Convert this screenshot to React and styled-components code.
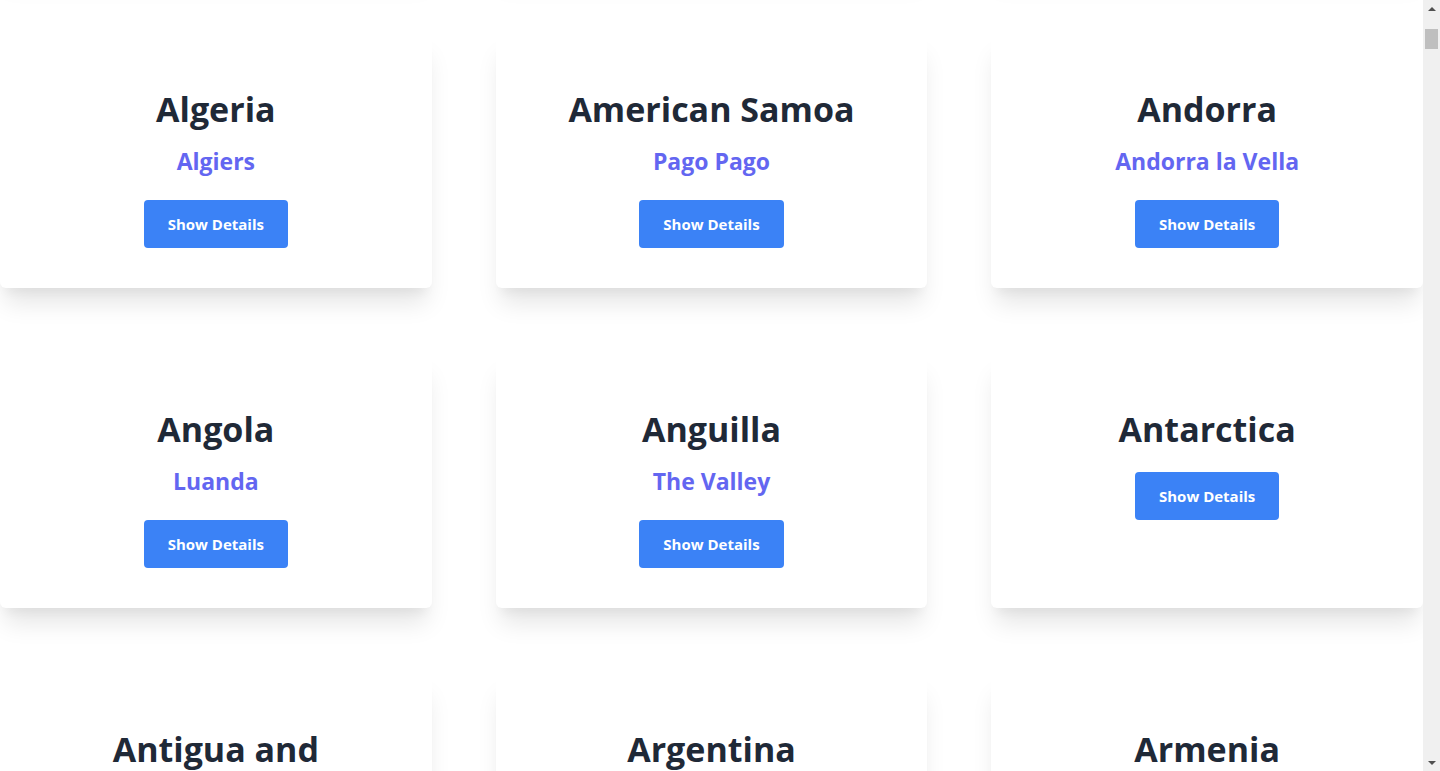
import React, { useLayoutEffect, useRef } from "react";
import styled, { createGlobalStyle } from "styled-components";

// name|capital, capital left empty when there is none
const RAW = `Afghanistan|Kabul;Åland Islands|Mariehamn;Albania|Tirana;Algeria|Algiers;American Samoa|Pago Pago;Andorra|Andorra la Vella;Angola|Luanda;Anguilla|The Valley;Antarctica|;Antigua and Barbuda|Saint John's;Argentina|Buenos Aires;Armenia|Yerevan;Aruba|Oranjestad;Australia|Canberra;Austria|Vienna;Azerbaijan|Baku;Bahamas|Nassau;Bahrain|Manama;Bangladesh|Dhaka;Barbados|Bridgetown;Belarus|Minsk;Belgium|Brussels;Belize|Belmopan;Benin|Porto-Novo;Bermuda|Hamilton;Bhutan|Thimphu;Bolivia (Plurinational State of)|Sucre;Bonaire, Sint Eustatius and Saba|Kralendijk;Bosnia and Herzegovina|Sarajevo;Botswana|Gaborone;Bouvet Island|;Brazil|Brasília;British Indian Ocean Territory|Diego Garcia;United States Minor Outlying Islands|;Virgin Islands (British)|Road Town;Virgin Islands (U.S.)|Charlotte Amalie;Brunei Darussalam|Bandar Seri Begawan;Bulgaria|Sofia;Burkina Faso|Ouagadougou;Burundi|Gitega;Cambodia|Phnom Penh;Cameroon|Yaoundé;Canada|Ottawa;Cabo Verde|Praia;Cayman Islands|George Town;Central African Republic|Bangui;Chad|N'Djamena;Chile|Santiago;China|Beijing;Christmas Island|Flying Fish Cove;Cocos (Keeling) Islands|West Island;Colombia|Bogotá;Comoros|Moroni;Congo|Brazzaville;Congo (Democratic Republic of the)|Kinshasa;Cook Islands|Avarua;Costa Rica|San José;Croatia|Zagreb;Cuba|Havana;Curaçao|Willemstad;Cyprus|Nicosia;Czech Republic|Prague;Denmark|Copenhagen;Djibouti|Djibouti;Dominica|Roseau;Dominican Republic|Santo Domingo;Ecuador|Quito;Egypt|Cairo;El Salvador|San Salvador;Equatorial Guinea|Malabo;Eritrea|Asmara;Estonia|Tallinn;Ethiopia|Addis Ababa;Falkland Islands (Malvinas)|Stanley;Faroe Islands|Tórshavn;Fiji|Suva;Finland|Helsinki;France|Paris;French Guiana|Cayenne;French Polynesia|Papeetē;French Southern Territories|Port-aux-Français;Gabon|Libreville;Gambia|Banjul;Georgia|Tbilisi;Germany|Berlin;Ghana|Accra;Gibraltar|Gibraltar;Greece|Athens;Greenland|Nuuk;Grenada|St. George's;Guadeloupe|Basse-Terre;Guam|Hagåtña;Guatemala|Guatemala City;Guernsey|St. Peter Port;Guinea|Conakry;Guinea-Bissau|Bissau;Guyana|Georgetown;Haiti|Port-au-Prince;Heard Island and McDonald Islands|;Vatican City|Vatican City;Honduras|Tegucigalpa;Hungary|Budapest;Hong Kong|City of Victoria;Iceland|Reykjavík;India|New Delhi;Indonesia|Jakarta;Ivory Coast|Yamoussoukro;Iran (Islamic Republic of)|Tehran;Iraq|Baghdad;Ireland|Dublin;Isle of Man|Douglas;Israel|Jerusalem;Italy|Rome;Jamaica|Kingston;Japan|Tokyo;Jersey|Saint Helier;Jordan|Amman;Kazakhstan|Nur-Sultan;Kenya|Nairobi;Kiribati|South Tarawa;Kuwait|Kuwait City;Kyrgyzstan|Bishkek;Lao People's Democratic Republic|Vientiane;Latvia|Riga;Lebanon|Beirut;Lesotho|Maseru;Liberia|Monrovia;Libya|Tripoli;Liechtenstein|Vaduz;Lithuania|Vilnius;Luxembourg|Luxembourg;Macao|;North Macedonia|Skopje;Madagascar|Antananarivo;Malawi|Lilongwe;Malaysia|Kuala Lumpur;Maldives|Malé;Mali|Bamako;Malta|Valletta;Marshall Islands|Majuro;Martinique|Fort-de-France;Mauritania|Nouakchott;Mauritius|Port Louis;Mayotte|Mamoudzou;Mexico|Mexico City;Micronesia (Federated States of)|Palikir;Moldova (Republic of)|Chișinău;Monaco|Monaco;Mongolia|Ulan Bator;Montenegro|Podgorica;Montserrat|Plymouth;Morocco|Rabat;Mozambique|Maputo;Myanmar|Naypyidaw;Namibia|Windhoek;Nauru|Yaren;Nepal|Kathmandu;Netherlands|Amsterdam;New Caledonia|Nouméa;New Zealand|Wellington;Nicaragua|Managua;Niger|Niamey;Nigeria|Abuja;Niue|Alofi;Norfolk Island|Kingston;Korea (Democratic People's Republic of)|Pyongyang;Northern Mariana Islands|Saipan;Norway|Oslo;Oman|Muscat;Pakistan|Islamabad;Palau|Ngerulmud;Palestine, State of|Ramallah;Panama|Panama City;Papua New Guinea|Port Moresby;Paraguay|Asunción;Peru|Lima;Philippines|Manila;Pitcairn|Adamstown;Poland|Warsaw;Portugal|Lisbon;Puerto Rico|San Juan;Qatar|Doha;Republic of Kosovo|Pristina;Réunion|Saint-Denis;Romania|Bucharest;Russian Federation|Moscow;Rwanda|Kigali;Saint Barthélemy|Gustavia;Saint Helena, Ascension and Tristan da Cunha|Jamestown;Saint Kitts and Nevis|Basseterre;Saint Lucia|Castries;Saint Martin (French part)|Marigot;Saint Pierre and Miquelon|Saint-Pierre;Saint Vincent and the Grenadines|Kingstown;Samoa|Apia;San Marino|City of San Marino;Sao Tome and Principe|São Tomé;Saudi Arabia|Riyadh;Senegal|Dakar;Serbia|Belgrade;Seychelles|Victoria;Sierra Leone|Freetown;Singapore|Singapore;Sint Maarten (Dutch part)|Philipsburg;Slovakia|Bratislava;Slovenia|Ljubljana;Solomon Islands|Honiara;Somalia|Mogadishu;South Africa|Pretoria;South Georgia and the South Sandwich Islands|King Edward Point;Korea (Republic of)|Seoul;Spain|Madrid;Sri Lanka|Sri Jayawardenepura Kotte;Sudan|Khartoum;South Sudan|Juba;Suriname|Paramaribo;Svalbard and Jan Mayen|Longyearbyen;Swaziland|Mbabane;Sweden|Stockholm;Switzerland|Bern;Syrian Arab Republic|Damascus;Taiwan|Taipei;Tajikistan|Dushanbe;Tanzania, United Republic of|Dodoma;Thailand|Bangkok;Timor-Leste|Dili;Togo|Lomé;Tokelau|Fakaofo;Tonga|Nuku'alofa;Trinidad and Tobago|Port of Spain;Tunisia|Tunis;Turkey|Ankara;Turkmenistan|Ashgabat;Turks and Caicos Islands|Cockburn Town;Tuvalu|Funafuti;Uganda|Kampala;Ukraine|Kyiv;United Arab Emirates|Abu Dhabi;United Kingdom of Great Britain and Northern Ireland|London;United States of America|Washington, D.C.;Uruguay|Montevideo;Uzbekistan|Tashkent;Vanuatu|Port Vila;Venezuela (Bolivarian Republic of)|Caracas;Vietnam|Hanoi;Wallis and Futuna|Mata-Utu;Western Sahara|El Aaiún;Yemen|Sana'a;Zambia|Lusaka;Zimbabwe|Harare`;

const countries = RAW.split(";").map((entry) => {
  const [name, capital] = entry.split("|");
  return { name, capital };
});

const GlobalStyle = createGlobalStyle`
  html, body {
    margin: 0;
    height: 100%;
    overflow: hidden;
    background: #ffffff;
    font-family: "Open Sans", "Noto Sans", sans-serif;
  }
  #root {
    height: 100%;
  }
`;

const Page = styled.div`
  display: flex;
  height: 100vh;
`;

const Scroller = styled.div`
  flex: 1;
  min-width: 0;
  overflow-y: auto;
  scrollbar-width: none;
  &::-webkit-scrollbar {
    display: none;
  }
`;

const Grid = styled.main`
  display: grid;
  grid-template-columns: repeat(3, 1fr);
  gap: 64px;
  padding: 32px 0;
`;

const Card = styled.div`
  height: 256px;
  box-sizing: border-box;
  padding: 57px 40px 0;
  background: #ffffff;
  border-radius: 6px;
  box-shadow: 0 20px 25px -5px rgba(0, 0, 0, 0.1),
    0 10px 10px -5px rgba(0, 0, 0, 0.04);
  display: flex;
  flex-direction: column;
  align-items: center;
  text-align: center;
`;

const Name = styled.h2`
  margin: 0;
  font-size: 34px;
  line-height: 40px;
  font-weight: 700;
  color: #1f2937;
`;

const Capital = styled.h3`
  margin: 16px 0 0;
  font-size: 23px;
  line-height: 32px;
  font-weight: 700;
  color: #6366f1;
`;

const Button = styled.button`
  margin-top: 23px;
  height: 48px;
  padding: 0 24px;
  border: none;
  border-radius: 4px;
  background: #3b82f6;
  color: #ffffff;
  font-family: inherit;
  font-size: 15px;
  font-weight: 700;
  cursor: pointer;
`;

// the window's scrollbar, classic style
const Rail = styled.div`
  width: 17px;
  flex-shrink: 0;
  background: #f0f0f0;
  display: flex;
  flex-direction: column;
  align-items: center;
`;

const Arrow = styled.div`
  height: 17px;
  width: 17px;
  display: flex;
  align-items: center;
  justify-content: center;
  &::before {
    content: "";
    border-left: 4px solid transparent;
    border-right: 4px solid transparent;
    ${(p) =>
      p.$down
        ? "border-top: 4px solid #505050;"
        : "border-bottom: 4px solid #505050;"}
  }
`;

const Track = styled.div`
  flex: 1;
  width: 100%;
  display: flex;
  justify-content: center;
  padding-top: 12px;
`;

const Thumb = styled.div`
  width: 13px;
  height: 20px;
  background: #bfbfbf;
`;

export default function App() {
  const scroller = useRef(null);

  useLayoutEffect(() => {
    if (scroller.current) scroller.current.scrollTop = 320;
  }, []);

  return (
    <Page>
      <GlobalStyle />
      <Scroller ref={scroller}>
        <Grid>
          {countries.map((c) => (
            <Card key={c.name}>
              <Name>{c.name}</Name>
              {c.capital && <Capital>{c.capital}</Capital>}
              <Button>Show Details</Button>
            </Card>
          ))}
        </Grid>
      </Scroller>
      <Rail>
        <Arrow />
        <Track>
          <Thumb />
        </Track>
        <Arrow $down />
      </Rail>
    </Page>
  );
}
